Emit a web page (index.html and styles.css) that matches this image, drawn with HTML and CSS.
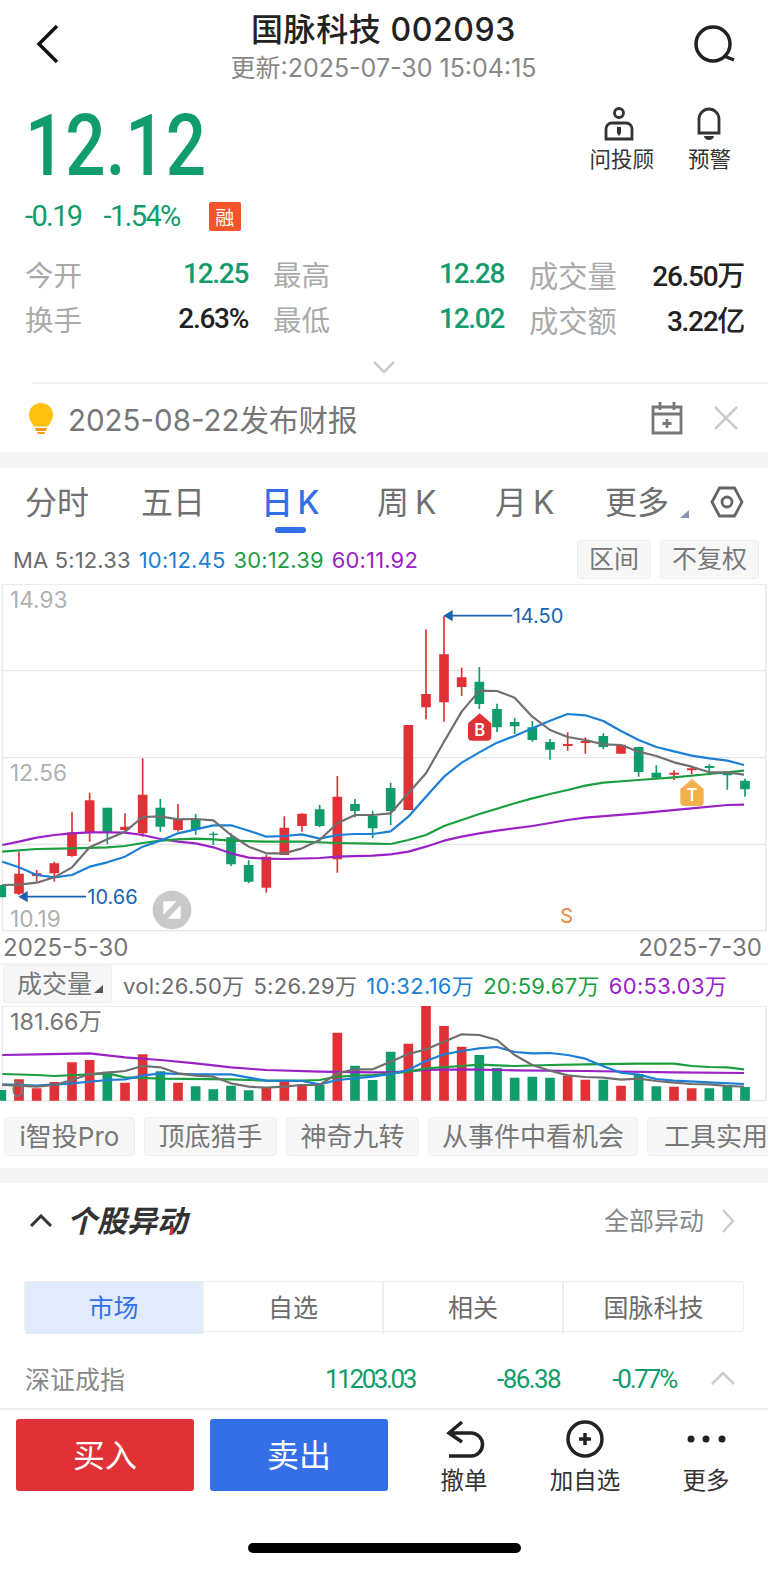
FILE: index.html
```html
<!DOCTYPE html>
<html lang="zh-CN">
<head>
  <meta charset="UTF-8" />
  <meta name="viewport" content="width=device-width, initial-scale=1.0" />
  <title>国脉科技 002093</title>
  <link rel="stylesheet" href="styles.css">
</head>
<body>
  <div class="page">

    <div class="topbar">
      <svg class="icon-back" width="24" height="40" viewBox="0 0 24 40"><polyline points="21,2 3,20 21,38" /></svg>
      <div class="topbar-title">
        <div class="name">国脉科技 002093</div>
        <div class="updated">更新:2025-07-30 15:04:15</div>
      </div>
      <svg class="icon-search" width="44" height="40" viewBox="0 0 44 40"><circle cx="20" cy="20" r="17" /><line x1="31" y1="32" x2="41" y2="36" /></svg>
    </div>

    <div class="quote">
      <div class="quote-main">
        <div class="price din">12.12</div>
        <div class="change">
          <span class="din">-0.19</span>
          <span class="din">-1.54%</span>
          <span class="rong">融</span>
        </div>
      </div>
      <div class="quote-actions">
        <div class="quote-action">
          <svg width="32" height="34" viewBox="0 0 32 34"><circle cx="16" cy="6" r="4.5" /><path d="M3 32V22a6 6 0 0 1 6-6h14a6 6 0 0 1 6 6v10z" /><path class="solid" d="M14 20h4v6l-2 3-2-3z" /></svg>
          <span>问投顾</span>
        </div>
        <div class="quote-action">
          <svg width="32" height="34" viewBox="0 0 32 34"><path d="M6 26V12a10 10 0 0 1 20 0v14z" /><path class="solid" d="M11 29h10a5 4 0 0 1-10 0z" /></svg>
          <span>预警</span>
        </div>
      </div>
    </div>

    <div class="stats">
      <div class="stat s1"><span>今开</span><b class="din green">12.25</b></div>
      <div class="stat s2"><span>最高</span><b class="din green">12.28</b></div>
      <div class="stat s3"><span>成交量</span><b class="din">26.50万</b></div>
      <div class="stat s1"><span>换手</span><b class="din">2.63%</b></div>
      <div class="stat s2"><span>最低</span><b class="din green">12.02</b></div>
      <div class="stat s3"><span>成交额</span><b class="din">3.22亿</b></div>
    </div>

    <div class="expand">
      <svg width="24" height="14" viewBox="0 0 24 14"><polyline points="2,2 12,12 22,2" /></svg>
    </div>

    <div class="notice">
      <svg class="bulb" width="26" height="32" viewBox="0 0 26 32">
        <path fill="#fdc10f" d="M13 1C6 1 1 6.500 1 13c0 5 3 8 5 11.500h14c2-3.500 5-6.500 5-11.500C25 6.500 20 1 13 1z" />
        <path fill="#f39a12" d="M7 26h12l-1 3h-10z" />
        <path fill="#f39a12" d="M9 30h8l-1 2h-6z" />
      </svg>
      <span class="notice-text">2025-08-22发布财报</span>
      <svg class="calendar" width="34" height="34" viewBox="0 0 34 34"><path d="M3 6h28v26H3z" /><path d="M3 13h28M10 1v8M24 1v8M17 18v9M12.500 22.500h9" /></svg>
      <svg class="close" width="26" height="26" viewBox="0 0 26 26"><path d="M2 2l22 22M24 2L2 24" /></svg>
    </div>

    <div class="gap gap-a"></div>

    <div class="tabs">
      <span class="t1">分时</span>
      <span class="t2">五日</span>
      <span class="t3 active">日 K</span>
      <span class="t4">周 K</span>
      <span class="t5">月 K</span>
      <span class="t6">更多</span>
      <i class="corner"></i>
      <svg class="hex" width="34" height="32" viewBox="0 0 34 32"><polygon points="2,16 9.500,2 24.500,2 32,16 24.500,30 9.500,30" /><circle cx="17" cy="16" r="5" /></svg>
    </div>

    <div class="ma-row">
      <div class="ma-text">
        <span class="c-gray">MA 5:12.33</span>
        <span class="c-blue">10:12.45</span>
        <span class="c-green">30:12.39</span>
        <span class="c-purple">60:11.92</span>
      </div>
      <span class="chip chip-range">区间</span>
      <span class="chip chip-adj">不复权</span>
    </div>

    <svg class="kchart" width="768" height="348" viewBox="0 -18 2304 1044">
      <path class="frame" d="M7 -18H2298V1022H7Z" />
      <path class="grid" d="M7 242H2298M7 503H2298M7 763H2298" />

      <text class="axis" x="30" y="55">14.93</text>
      <text class="axis" x="30" y="574">12.56</text>
      <text class="axis" x="30" y="1010">10.19</text>

      <g class="up">
        <path class="wick" d="M57 785V915M110 840V875M163 815V875M216 665V800M269 608V755M375 670V730M428 505V740M534 642V725M799 795V908M853 679V795M906 670V725M1012 558V848" />
        <path class="body" d="M57 851V911M110 850V858M163 820V850M216 727V798M269 631V727M375 710V720M428 614V730M534 690V720M799 800V893M853 713V795M906 671V708M1012 620V808" />
      </g>
      <g class="down">
        <path class="wick" d="M322 653V762M481 627V725M587 672V735M640 725V765M693 730V828M746 810V880M959 645V712M1065 627V682M1118 662V745" />
        <path class="body" d="M4 885V922M322 653V727M481 653V710M587 690V718M693 742V823M746 825V875M959 658V708M1065 642V663M1118 678V715" />
        <path class="thin" d="M628 733H654" />
      </g>
      <g transform="translate(1152)">
        <g class="up">
          <path class="wick" d="M126 118V388M180 78V395M233 233V318M551 427V482M604 442V491M870 541V571M923 531V553" />
          <path class="body" d="M73 405V660M126 312V352M180 193V337M233 262V291M711 464V491" />
          <path class="flat" d="M537 465H566M590 456H619M856 551H885M909 538H938" />
        </g>
        <g class="down">
          <path class="wick" d="M20 578V705M286 231V357M339 341V426M392 383V432M445 393V455M498 447V509M658 430V478M764 470V560M817 526V565M976 523V556M1030 545V599M1083 566V620" />
          <path class="body" d="M20 594V663M286 275V342M339 357V412M392 396V409M445 412V450M498 456V479M658 438V471M764 471V546M817 548V563M1030 546V556M1083 572V598" />
          <path class="flat" d="M962 531H991" />
        </g>
      </g>

      <polyline class="l-purple" points="7,765 57,755 110,743 163,735 216,730 269,727 322,727 375,728 428,735 481,747 534,755 587,760 640,772 693,790 746,803 799,806 853,807 959,804 1012,800 1118,797 1172,793" />
      <polyline class="l-green" points="7,785 110,777 216,775 322,772 375,768 428,759 481,752 534,748 587,746 640,748 693,752 799,755 906,755 1012,759 1118,761 1172,762" />
      <polyline class="l-blue" points="7,815 57,832 110,855 163,862 216,855 269,830 322,817 375,800 428,770 481,752 534,730 587,718 640,706 693,706 746,722 799,740 853,738 906,733 959,746 1012,735 1065,732 1118,732 1172,724" />
      <polyline class="l-gray" points="7,885 57,884 110,878 163,862 216,832 269,772 322,748 375,725 428,681 481,679 534,688 587,687 640,691 693,735 746,770 799,790 853,790 906,775 959,750 1012,700 1065,675 1118,675 1172,670" />
      <g transform="translate(1152)">
        <polyline class="l-purple" points="20,793 73,785 126,770 180,752 233,740 286,730 339,722 445,708 551,690 604,683 764,670 923,655 1030,645 1080,644" />
        <polyline class="l-green" points="20,762 73,750 126,735 180,708 233,690 286,672 339,656 392,640 445,625 498,612 551,600 604,587 658,578 764,570 870,562 976,552 1080,542" />
        <polyline class="l-blue" points="20,724 73,680 126,620 180,560 233,518 286,487 339,458 392,438 445,415 498,392 551,372 604,376 658,393 711,423 764,450 817,471 870,484 923,497 976,505 1030,512 1080,525" />
        <polyline class="l-gray" points="20,670 73,610 126,550 180,455 233,365 286,302 339,303 392,323 445,380 498,420 551,441 604,450 658,463 711,465 764,485 817,498 870,517 923,530 976,547 1030,547 1080,554" />

        <path class="arrow" d="M200 77H385" />
        <path class="arrow-head" d="M178 77L206 60V94Z" />
        <text class="peak" x="386" y="98">14.50</text>

        <path fill="#e03236" d="M252 400L287 370L322 400V440Q322 452 310 452H264Q252 452 252 440Z" />
        <text class="badge" x="287" y="437">B</text>
        <path fill="#f4b04a" d="M889 597L924 567L959 597V636Q959 648 947 648H901Q889 648 889 636Z" />
        <text class="badge" x="924" y="633">T</text>
        <text class="s-mark" x="548" y="1000">S</text>
      </g>

      <path class="arrow" d="M78 920H258" />
      <path class="arrow-head" d="M55 920L83 903V937Z" />
      <text class="peak" x="262" y="941">10.66</text>

      <circle cx="516" cy="960" r="58" fill="#c9c9c9" />
      <path fill="#fff" d="M490 934H530L490 974ZM542 946V986H502Z" />
    </svg>

    <div class="dates"><span>2025-5-30</span><span>2025-7-30</span></div>

    <div class="vol-row">
      <span class="chip chip-vol">成交量<i class="corner dark"></i></span>
      <div class="vol-text">
        <span class="c-gray">vol:26.50万</span>
        <span class="c-gray">5:26.29万</span>
        <span class="c-blue">10:32.16万</span>
        <span class="c-green">20:59.67万</span>
        <span class="c-purple">60:53.03万</span>
      </div>
    </div>

    <svg class="volchart" width="768" height="98" viewBox="0 228 2304 294">
      <path class="frame" d="M7 228H2298V512H7Z" />
      <g class="up">
        <path class="body" d="M57 448V512M110 475V512M163 456V512M216 397V512M269 390V512M375 458V512M428 373V512M534 458V512M799 473V512M853 455V512M906 462V512M1012 308V512" />
      </g>
      <g class="down">
        <path class="body" d="M4 480V512M322 425V512M481 424V512M587 469V512M640 478V512M693 467V512M746 481V512M959 465V512M1065 407V512M1118 450V512" />
      </g>
      <g transform="translate(1152)">
        <g class="up"><path class="body" d="M73 341V512M126 228V512M180 288V512M233 350V512M551 437V512M604 449V512M711 467V512M870 470V512M923 475V512" /></g>
        <g class="down"><path class="body" d="M20 365V512M286 375V512M339 414V512M392 443V512M445 440V512M498 443V512M658 449V512M764 432V512M817 469V512M976 475V512M1030 465V512M1083 471V512" /></g>
      </g>
      <polyline class="l-purple" points="7,375 110,373 269,370 375,382 481,390 587,400 693,412 799,420 959,425 1118,427 1172,427" />
      <polyline class="l-green" points="7,432 110,435 163,438 269,433 322,430 375,442 481,446 693,448 799,452 906,452 959,450 1012,440 1118,435 1172,430" />
      <polyline class="l-blue" points="7,463 110,467 216,460 322,450 375,448 428,437 481,430 587,433 693,433 746,443 799,452 906,453 959,463 1012,450 1118,440 1172,432" />
      <polyline class="l-gray" points="7,465 57,467 110,470 163,465 216,450 269,432 322,428 375,423 428,408 481,412 534,430 587,437 640,440 693,460 746,470 799,473 853,470 906,465 959,465 1012,430 1065,418 1118,418 1172,395" />
      <g transform="translate(1152)">
        <polyline class="l-purple" points="20,427 126,420 233,418 392,421 604,423 870,427 1080,429" />
        <polyline class="l-green" points="20,430 73,425 126,415 233,408 286,404 392,408 498,405 604,403 764,401 870,401 923,408 976,411 1030,412 1080,418" />
        <polyline class="l-blue" points="20,432 73,420 126,393 180,373 233,363 286,355 339,351 392,366 445,370 498,369 551,375 604,386 658,409 711,428 764,434 817,447 870,452 976,457 1080,462" />
        <polyline class="l-gray" points="20,395 73,372 126,358 180,335 233,313 286,315 339,330 392,375 445,405 498,422 551,436 604,441 658,443 711,449 764,446 817,453 870,458 923,462 976,463 1030,468 1080,470" />
      </g>
      <text class="axis dark" x="30" y="300">181.66万</text>
      <text class="axis dark zero" x="34" y="502">0</text>
    </svg>

    <div class="tags">
      <span class="tag w1">i智投Pro</span>
      <span class="tag w2">顶底猎手</span>
      <span class="tag w2">神奇九转</span>
      <span class="tag w3">从事件中看机会</span>
      <span class="tag w4">工具实用工具</span>
    </div>

    <div class="gap gap-b"></div>

    <div class="section-head">
      <svg class="fold" width="24" height="14" viewBox="0 0 24 14"><polyline points="2,12 12,2 22,12" /></svg>
      <span class="section-title">个股异动<i class="slash"></i></span>
      <span class="section-more">全部异动</span>
      <svg class="more-arrow" width="14" height="26" viewBox="0 0 14 26"><polyline points="2,2 12,13 2,24" /></svg>
    </div>

    <div class="seg">
      <span class="active">市场</span>
      <span>自选</span>
      <span>相关</span>
      <span>国脉科技</span>
    </div>

    <div class="index-row">
      <span class="index-name">深证成指</span>
      <span class="din green n1">11203.03</span>
      <span class="din green n2">-86.38</span>
      <span class="din green n3">-0.77%</span>
      <svg width="24" height="14" viewBox="0 0 24 14"><polyline points="1,13 12,2 23,13" /></svg>
    </div>

    <div class="bottom">
      <button class="trade buy">买入</button>
      <button class="trade sell">卖出</button>
      <div class="tool t-undo">
        <svg width="40" height="38" viewBox="0 0 40 38"><path d="M16 2L3 13l13 9M3 13h22a11.500 11.500 0 0 1 0 23H3" /></svg>
        <span>撤单</span>
      </div>
      <div class="tool t-add">
        <svg width="40" height="38" viewBox="0 0 40 38"><circle cx="20" cy="19" r="17" /><path d="M20 13v12M14 19h12" /></svg>
        <span>加自选</span>
      </div>
      <div class="tool t-more">
        <svg width="40" height="38" viewBox="0 0 40 38"><circle class="solid" cx="5" cy="19" r="3.500" /><circle class="solid" cx="20" cy="19" r="3.500" /><circle class="solid" cx="36" cy="19" r="3.500" /></svg>
        <span>更多</span>
      </div>
    </div>

    <div class="home-bar"></div>
  </div>
</body>
</html>
```
FILE: styles.css
```css
* {
  box-sizing: border-box;
}
html, body {
  margin: 0;
  padding: 0;
  background: #fff;
}
body {
  font-family: Inter, "Noto Sans CJK SC", sans-serif;
  color: #222;
}
.page {
  width: 768px;
  height: 1570px;
  overflow: hidden;
  position: relative;
  background: #fff;
}
svg {
  display: block;
  flex: none;
}
.din {
  font-family: Roboto, "Noto Sans CJK SC", sans-serif;
}
.green {
  color: #119c6b;
}

/* top bar */
.topbar {
  height: 96px;
  display: flex;
  align-items: flex-start;
  padding: 24px 31px 0 36px;
}
.topbar-title {
  flex: 1;
  margin-top: -24px;
  padding: 11px 0 0 14px;
  text-align: center;
}
.name {
  font-size: 32px;
  line-height: 38px;
  font-weight: 500;
  color: #222;
  letter-spacing: 0.6px;
}
.updated {
  font-size: 25px;
  line-height: 30px;
  margin-top: 4px;
  color: #888;
}
.icon-back polyline {
  fill: none;
  stroke: #111;
  stroke-width: 3.5;
}
.icon-search circle, .icon-search line {
  fill: none;
  stroke: #222;
  stroke-width: 3.5;
}

/* quote */
.quote {
  height: 144px;
  display: flex;
  justify-content: space-between;
  padding-left: 25px;
}
.price {
  font-size: 86px;
  line-height: 88px;
  margin-top: 6px;
  font-weight: 500;
  color: #119c6b;
  width: 216px;
  transform: scaleX(0.825);
  transform-origin: left center;
}
.change {
  display: flex;
  align-items: center;
  margin-top: 11px;
  height: 30px;
  color: #119c6b;
  font-size: 29px;
  letter-spacing: -1.6px;
}
.change span:nth-child(2) {
  margin-left: 22px;
}
.rong {
  width: 32px;
  height: 29px;
  margin-left: 29px;
  background: #f4542b;
  color: #fff;
  font-size: 19px;
  line-height: 29px;
  text-align: center;
  letter-spacing: 0;
  font-family: "Noto Sans CJK SC", sans-serif;
  border-radius: 2px;
}
.quote-actions {
  display: flex;
  padding-top: 9px;
  padding-right: 37px;
}
.quote-action {
  display: flex;
  flex-direction: column;
  align-items: center;
  margin-left: 34px;
  font-size: 21.500px;
  line-height: 28px;
  color: #333;
}
.quote-action:first-child svg {
  margin-left: -5px;
}
.quote-action svg {
  margin-top: 2px;
  margin-bottom: 4px;
}
.quote-action svg path, .quote-action svg circle {
  fill: none;
  stroke: #333;
  stroke-width: 2.8;
}
.quote-action svg path.solid {
  fill: #333;
  stroke: none;
}

/* stats */
.stats {
  display: grid;
  grid-template-columns: 223px 231px 215px;
  column-gap: 25px;
  grid-auto-rows: 45px;
  padding: 11px 0 0 25px;
  height: 102px;
}
.stat {
  display: flex;
  justify-content: space-between;
  align-items: center;
}
.stat span {
  font-size: 28.500px;
  color: #aaa;
}
.stat.s3 span {
  font-size: 29.300px;
}
.stat b {
  font-size: 28px;
  font-weight: 500;
  letter-spacing: -1.3px;
}

.expand {
  height: 42px;
  margin-left: 32px;
  padding: 18px 0 0 340px;
  border-bottom: 2px solid #f4f4f4;
}
.expand polyline {
  fill: none;
  stroke: #ccc;
  stroke-width: 2.5;
}

/* notice */
.notice {
  height: 68px;
  display: flex;
  align-items: center;
  padding-left: 28px;
  position: relative;
}
.bulb {
  margin-right: 14px;
}
.notice-text {
  flex: 1;
  font-size: 29.500px;
  color: #777;
}
.calendar {
  margin-right: 29px;
}
.calendar path {
  fill: none;
  stroke: #777;
  stroke-width: 2.8;
}
.close {
  margin-right: 29px;
}
.close path {
  fill: none;
  stroke: #ccc;
  stroke-width: 2.5;
}

.gap {
  background: #f5f5f5;
}
.gap-a {
  height: 16px;
}
.gap-b {
  height: 15px;
}

/* period tabs */
.tabs {
  height: 67px;
  position: relative;
  display: flex;
  font-size: 32px;
  line-height: 38px;
  color: #707070;
  padding-top: 16px;
  padding-left: 25px;
  word-spacing: -3px;
}
.tabs span {
  white-space: nowrap;
}
.t1 { width: 116px; }
.t2 { width: 123px; }
.t3 { width: 113px; }
.t4 { width: 118px; }
.t5 { width: 110px; }
.t6 { width: 75px; }
.tabs .active {
  color: #3370e8;
  font-weight: 500;
  position: relative;
  left: -3px;
  letter-spacing: -0.5px;
}
.tabs .active::after {
  content: "";
  position: absolute;
  left: 14px;
  top: 43px;
  width: 31px;
  height: 6px;
  border-radius: 3px;
  background: #3370e8;
}
.corner {
  display: inline-block;
  width: 0;
  height: 0;
  border-left: 9px solid transparent;
  border-bottom: 8px solid #8a93b8;
  margin-top: 26px;
}
.corner.dark {
  border-bottom-color: #555;
  margin: 0 0 0 2px;
}
.hex {
  margin-left: 21px;
  margin-top: 2px;
}
.hex polygon, .hex circle {
  fill: none;
  stroke: #666;
  stroke-width: 2.8;
}

/* ma legend */
.ma-row {
  height: 49px;
  display: flex;
  align-items: center;
  padding: 0 9px 0 13px;
}
.ma-text, .vol-text {
  flex: 1;
  display: flex;
  white-space: nowrap;
  font-size: 22px;
  line-height: 28px;
  gap: 8px;
  padding-top: 1px;
  letter-spacing: 0.15px;
}
.c-gray { color: #6b6b6b; }
.c-blue { color: #1b7fd6; }
.c-green { color: #1a9e3f; }
.c-purple { color: #9b21c6; }
.chip {
  height: 39px;
  line-height: 37px;
  background: #f7f7f7;
  border: 1px solid #eee;
  border-radius: 3px;
  color: #777;
  font-size: 25px;
  text-align: center;
  white-space: nowrap;
}
.chip-range {
  width: 74px;
  margin-right: 9px;
}
.chip-adj {
  width: 99px;
}

/* k-line chart */
.kchart, .volchart {
  font-family: Inter, "Noto Sans CJK SC", sans-serif;
}
.frame {
  fill: none;
  stroke: #e6e6e6;
  stroke-width: 4;
}
.grid {
  fill: none;
  stroke: #e6e6e6;
  stroke-width: 4;
}
.axis {
  fill: #b0b0b0;
  font-size: 68px;
}
.axis.dark {
  fill: #777;
  font-size: 70px;
}
.axis.zero {
  font-size: 63px;
}
.up path {
  stroke: #e03236;
  fill: none;
}
.down path {
  stroke: #119c6b;
  fill: none;
}
.wick {
  stroke-width: 5;
}
.body {
  stroke-width: 29;
}
.flat {
  stroke-width: 6;
}
.thin {
  stroke-width: 4;
}
.l-gray, .l-blue, .l-green, .l-purple {
  fill: none;
  stroke-width: 6.500;
  stroke-linejoin: round;
}
.l-gray { stroke: #6f6f6f; }
.l-blue { stroke: #1b7fd6; }
.l-green { stroke: #1a9e3f; }
.l-purple { stroke: #9b21c6; }
.arrow {
  stroke: #1b63b0;
  stroke-width: 5;
}
.arrow-head {
  fill: #1b63b0;
}
.peak {
  fill: #1b63b0;
  font-size: 60px;
}
.badge {
  fill: #fff;
  font-size: 50px;
  font-weight: 600;
  text-anchor: middle;
}
.s-mark {
  fill: #e8893a;
  font-size: 60px;
  text-anchor: middle;
}

.dates {
  height: 33px;
  display: flex;
  justify-content: space-between;
  align-items: center;
  padding: 0 6px 0 3px;
  font-size: 24px;
  color: #777;
  border-bottom: 2px solid #f4f4f4;
}

/* volume legend */
.vol-row {
  height: 41px;
  display: flex;
  align-items: center;
  padding-left: 3px;
}
.chip-vol {
  width: 109px;
  height: 38px;
  line-height: 36px;
  margin-right: 11px;
  margin-top: -3px;
  padding-left: 5px;
}
.vol-text {
  font-size: 22px;
  gap: 9px;
  padding-top: 0;
  letter-spacing: 0.3px;
}

/* tags */
.tags {
  height: 64px;
  display: flex;
  gap: 9px;
  padding: 13px 0 0 4px;
  white-space: nowrap;
  overflow: hidden;
}
.tag {
  flex: none;
  height: 39px;
  line-height: 37px;
  background: #f7f7f7;
  border: 1px solid #eee;
  border-radius: 4px;
  color: #777;
  font-size: 26px;
  text-align: center;
  overflow: hidden;
}
.w1 { width: 131px; }
.w2 { width: 133px; }
.w3 { width: 210px; }
.w4 { width: 180px; padding-left: 16px; text-align: left; }

/* movement section */
.section-head {
  height: 98px;
  display: flex;
  align-items: flex-start;
  padding: 21px 33px 0 29px;
}
.fold {
  margin-top: 10px;
  margin-right: 14px;
}
.fold polyline {
  fill: none;
  stroke: #333;
  stroke-width: 3;
}
.section-title {
  position: relative;
  flex: 1;
  font-size: 30px;
  line-height: 34px;
  font-weight: 700;
  font-style: italic;
  color: #333;
}
.slash {
  position: absolute;
  left: 103px;
  top: 23px;
  width: 3px;
  height: 8px;
  background: #e03236;
  transform: skewX(-12deg);
}
.section-more {
  font-size: 25px;
  line-height: 34px;
  color: #888;
  margin-right: 17px;
}
.more-arrow {
  margin-top: 4px;
}
.more-arrow polyline {
  fill: none;
  stroke: #ccc;
  stroke-width: 2.5;
}
.seg {
  height: 51px;
  margin: 0 24px;
  display: grid;
  grid-template-columns: 177px 180px 180px 181px;
  border: 1px solid #eee;
  border-radius: 3px;
}
.seg span {
  line-height: 52px;
  text-align: center;
  font-size: 25px;
  color: #6b6b6b;
  border-left: 2px solid #eee;
}
.seg span.active {
  background: #e2ebfb;
  color: #3370e8;
  border-left: none;
}
.index-row {
  height: 76px;
  position: relative;
  display: flex;
  align-items: center;
  padding: 18px 33px 3px 25px;
}
.index-name {
  width: 300px;
  font-size: 25px;
  color: #888;
}
.index-row .din {
  font-size: 26px;
  line-height: 32px;
  padding-top: 2px;
  font-weight: 400;
  letter-spacing: -1.6px;
  text-align: right;
}
.index-row .n1 {
  letter-spacing: -2.4px;
}
.index-row .n3 {
  letter-spacing: -2.2px;
}
.n1 { width: 89px; }
.n2 { width: 146px; }
.n3 { width: 116px; margin-right: 35px; }
.index-row svg polyline {
  fill: none;
  stroke: #ccc;
  stroke-width: 2.5;
}

/* bottom bar */
.bottom {
  height: 120px;
  border-top: 2px solid #eee;
  display: flex;
  padding: 9px 0 0 16px;
}
.trade {
  width: 178px;
  height: 72px;
  border: none;
  border-radius: 3px;
  color: #fff;
  font-size: 32px;
  line-height: 68px;
  font-family: "Noto Sans CJK SC", sans-serif;
  padding: 0 0 4px;
}
.buy {
  background: #e03236;
  margin-right: 16px;
}
.sell {
  background: #3370e8;
}
.tool {
  width: 80px;
  display: flex;
  flex-direction: column;
  align-items: center;
  font-size: 23.500px;
  line-height: 30px;
  color: #333;
}
.tool svg {
  margin-bottom: 8px;
  margin-top: 1px;
}
.tool svg path, .tool svg circle {
  fill: none;
  stroke: #222;
  stroke-width: 3.5;
}
.tool svg circle.solid {
  fill: #222;
  stroke: none;
}
.t-undo { margin-left: 36px; }
.t-add { margin-left: 41px; }
.t-more { margin-left: 41px; }
.t-undo svg { margin-left: 4px; }

.home-bar {
  position: absolute;
  left: 248px;
  top: 1543px;
  width: 273px;
  height: 10px;
  border-radius: 5px;
  background: #000;
}
```
